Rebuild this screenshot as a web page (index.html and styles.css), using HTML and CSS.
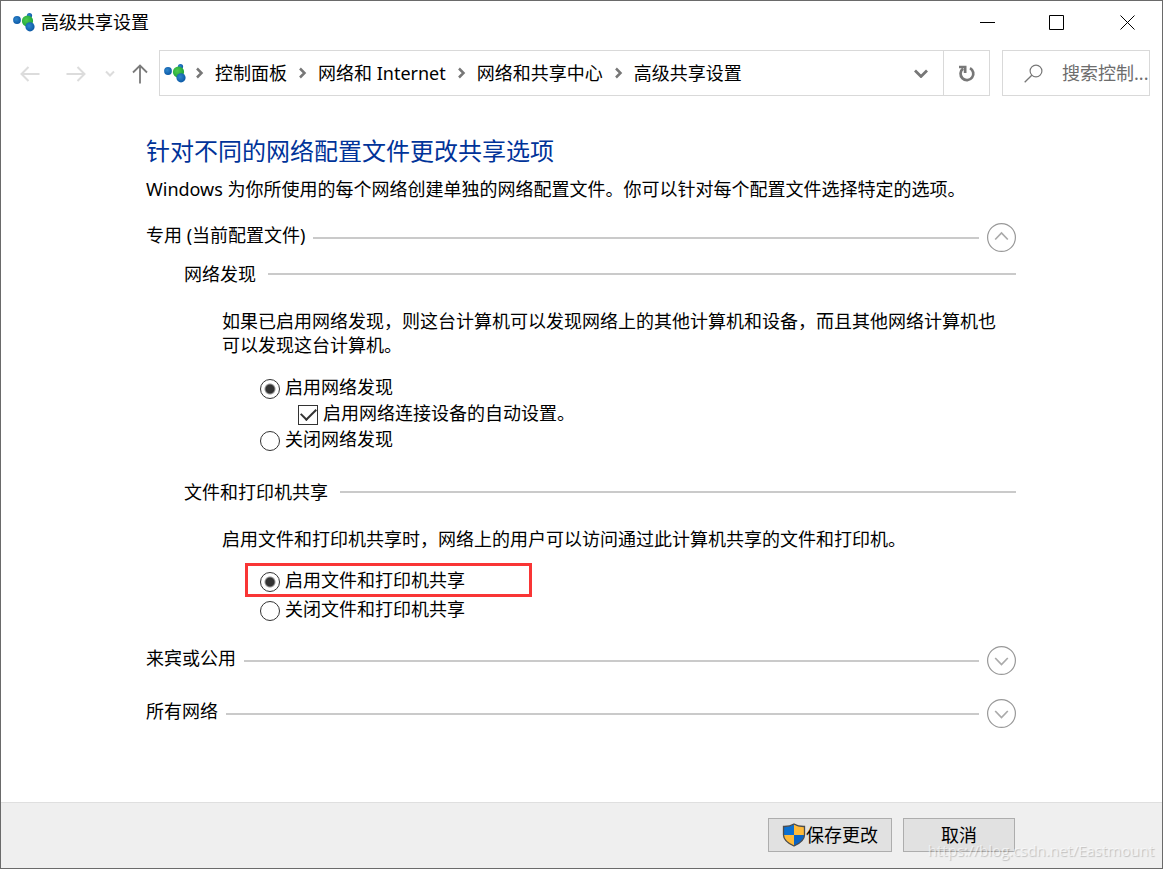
FILE: index.html
```html
<!DOCTYPE html>
<html lang="zh-CN">
<head>
<meta charset="utf-8">
<meta name="viewport" content="width=device-width, initial-scale=1">
<title>高级共享设置</title>
<link rel="stylesheet" href="styles.css">
</head>
<body>
<svg class="defs" width="0" height="0" aria-hidden="true">
  <defs>
    <radialGradient id="blue" cx="40%" cy="40%" r="60%"><stop offset="0" stop-color="#2f86cc"/><stop offset="1" stop-color="#0d5aa7"/></radialGradient>
    <radialGradient id="green" cx="40%" cy="40%" r="60%"><stop offset="0" stop-color="#4fcb4f"/><stop offset="1" stop-color="#1fa53a"/></radialGradient>
    <symbol id="network" viewBox="0 0 22 20">
      <circle cx="4" cy="8" r="3.9" fill="url(#blue)"/>
      <circle cx="16.500" cy="3.600" r="2.600" fill="url(#blue)"/>
      <circle cx="14.500" cy="9" r="5.600" fill="url(#green)"/>
      <circle cx="17" cy="14.800" r="4.600" fill="url(#blue)"/>
    </symbol>
    <symbol id="crumb" viewBox="0 0 10 12"><path d="M2 1.500 6.500 6 2 10.500" fill="none" stroke="#777" stroke-width="2.500"/></symbol>
    <symbol id="up" viewBox="0 0 29 29"><circle cx="14.500" cy="14.500" r="13.900" fill="none" stroke="#999" stroke-width="1.200"/><path d="m8.200 16.500 6.300-6.600 6.300 6.600" fill="none" stroke="#aaa" stroke-width="1.700"/></symbol>
    <symbol id="down" viewBox="0 0 29 29"><circle cx="14.500" cy="14.500" r="13.900" fill="none" stroke="#999" stroke-width="1.200"/><path d="m8.200 12 6.300 6.600 6.300-6.600" fill="none" stroke="#aaa" stroke-width="1.700"/></symbol>
  </defs>
</svg>
<div class="window">
  <header class="titlebar">
    <svg class="net-icon" aria-hidden="true"><use href="#network"/></svg>
    <span class="title">高级共享设置</span>
    <div class="controls">
      <button class="control" type="button" aria-label="最小化"><svg width="15" height="15"><path d="M0 7.500h15" stroke="#000"/></svg></button>
      <button class="control" type="button" aria-label="最大化"><svg width="16" height="15"><path d="M.5.5h14v14H.5z" fill="none" stroke="#000"/></svg></button>
      <button class="control" type="button" aria-label="关闭"><svg width="15" height="15"><path d="m.5.5 14 14m0-14-14 14" stroke="#000"/></svg></button>
    </div>
  </header>

  <nav class="navbar">
    <div class="history">
      <button class="step" type="button" aria-label="后退" disabled><svg width="20" height="16"><path d="M19.500 8H2M8.500 1 1.500 8l7 7" fill="none" stroke="#dcdcdc" stroke-width="2"/></svg></button>
      <button class="step" type="button" aria-label="前进" disabled><svg width="20" height="16"><path d="M.5 8H18M11.500 1l7 7-7 7" fill="none" stroke="#dcdcdc" stroke-width="2"/></svg></button>
      <button class="step recent" type="button" aria-label="最近浏览" disabled><svg width="10" height="8"><path d="m1 1.500 4 4 4-4" fill="none" stroke="#dcdcdc" stroke-width="2"/></svg></button>
      <button class="step parent" type="button" aria-label="向上"><svg width="16" height="20"><path d="M8 19.500V2M1 8.500l7-7 7 7" fill="none" stroke="#7a7a7a" stroke-width="1.800"/></svg></button>
    </div>
    <div class="address">
      <svg class="net-icon" aria-hidden="true"><use href="#network"/></svg>
      <svg class="crumb-arrow first" aria-hidden="true"><use href="#crumb"/></svg>
      <a class="crumb" href="#">控制面板</a>
      <svg class="crumb-arrow" aria-hidden="true"><use href="#crumb"/></svg>
      <a class="crumb" href="#">网络和 Internet</a>
      <svg class="crumb-arrow" aria-hidden="true"><use href="#crumb"/></svg>
      <a class="crumb" href="#">网络和共享中心</a>
      <svg class="crumb-arrow" aria-hidden="true"><use href="#crumb"/></svg>
      <a class="crumb" href="#">高级共享设置</a>
      <button class="open" type="button" aria-label="以前的位置"><svg width="14" height="10"><path d="m1 2.500 6 6 6-6" fill="none" stroke="#777" stroke-width="2.800"/></svg></button>
      <button class="refresh" type="button" aria-label="刷新"><svg width="18" height="18"><path d="M5.100 4.600A6.400 6.400 0 1 0 12 4.100" fill="none" stroke="#777" stroke-width="2.700"/><path d="M1 1.800h7.500V9H5.800V4.300H1z" fill="#777"/></svg></button>
    </div>
    <label class="search">
      <svg width="19" height="19" aria-hidden="true"><circle cx="12" cy="7" r="5.900" fill="none" stroke="#777" stroke-width="1.200"/><path d="M7.800 11.200.7 18.300" stroke="#777" stroke-width="1.300"/></svg>
      <input class="search-input" type="text" placeholder="搜索控制..." aria-label="搜索控制面板">
    </label>
  </nav>

  <main class="content">
    <h1 class="heading">针对不同的网络配置文件更改共享选项</h1>
    <p class="intro">Windows 为你所使用的每个网络创建单独的网络配置文件。你可以针对每个配置文件选择特定的选项。</p>

    <section class="profile">
      <div class="profile-head">
        <h2 class="profile-name">专用 (当前配置文件)</h2>
        <span class="rule"></span>
        <button class="toggle" type="button" aria-label="折叠专用"><svg width="29" height="29"><use href="#up"/></svg></button>
      </div>
      <div class="group">
        <div class="group-head"><h3 class="group-name">网络发现</h3><span class="rule"></span></div>
        <p class="description">如果已启用网络发现，则这台计算机可以发现网络上的其他计算机和设备，而且其他网络计算机也可以发现这台计算机。</p>
        <div class="options discovery">
          <label class="option"><input class="radio" type="radio" name="discovery" checked><span class="caption">启用网络发现</span></label>
          <label class="option nested"><input class="check" type="checkbox" checked><span class="caption">启用网络连接设备的自动设置。</span></label>
          <label class="option"><input class="radio" type="radio" name="discovery"><span class="caption">关闭网络发现</span></label>
        </div>
      </div>
      <div class="group sharing">
        <div class="group-head"><h3 class="group-name">文件和打印机共享</h3><span class="rule"></span></div>
        <p class="description">启用文件和打印机共享时，网络上的用户可以访问通过此计算机共享的文件和打印机。</p>
        <div class="options printers">
          <label class="option marked"><input class="radio" type="radio" name="sharing" checked><span class="caption">启用文件和打印机共享</span></label>
          <label class="option"><input class="radio" type="radio" name="sharing"><span class="caption">关闭文件和打印机共享</span></label>
        </div>
      </div>
    </section>

    <section class="profile">
      <div class="profile-head">
        <h2 class="profile-name">来宾或公用</h2>
        <span class="rule"></span>
        <button class="toggle" type="button" aria-label="展开来宾或公用"><svg width="29" height="29"><use href="#down"/></svg></button>
      </div>
    </section>
    <section class="profile">
      <div class="profile-head">
        <h2 class="profile-name">所有网络</h2>
        <span class="rule"></span>
        <button class="toggle" type="button" aria-label="展开所有网络"><svg width="29" height="29"><use href="#down"/></svg></button>
      </div>
    </section>
  </main>

  <footer class="footer">
    <button class="action save" type="button"><svg width="24" height="24" viewBox="0 0 24 24" aria-hidden="true">
      <path d="M12 1C9 3 5 3.600 1.500 3.500V12c0 5 5 8.500 10.500 11z" fill="#0b6fd0"/>
      <path d="M12 1c3 2 7 2.600 10.500 2.500V12c0 5-5 8.500-10.500 11z" fill="#0a63c4"/>
      <path d="M12 1c3 2 7 2.600 10.500 2.500V12H12zM1.500 12H12v11C6.500 20.500 1.500 17 1.500 12z" fill="#ffba38"/>
      <path d="M12 1C9 3 5 3.600 1.500 3.500V12c0 5 5 8.500 10.500 11 5.500-2.500 10.500-6 10.500-11V3.500C19 3.600 15 3 12 1z" fill="none" stroke="#4d4d4d" stroke-width="1.300"/>
    </svg>保存更改</button>
    <button class="action cancel" type="button">取消</button>
    <span class="watermark">https://blog.csdn.net/Eastmount</span>
  </footer>
</div>
</body>
</html>
```

FILE: styles.css
```css
* { box-sizing: border-box; }

body {
  margin: 0;
  background: #fff;
  color: #000;
  font: 18px/24px "Noto Sans", "Noto Sans CJK SC", sans-serif;
}

button, input { font: inherit; color: inherit; }

button {
  display: flex;
  align-items: center;
  justify-content: center;
  padding: 0;
  border: 0;
  background: none;
}

svg { display: block; flex: none; }
.defs { position: absolute; }

h1, h2, h3, p { margin: 0; font-weight: inherit; }
h2, h3 { font-size: inherit; }

.window {
  display: flex;
  flex-direction: column;
  min-height: 100vh;
  border: 1px solid #6a6a6a;
}

/* Title bar */
.titlebar {
  display: flex;
  align-items: center;
  height: 42px;
  padding-left: 12px;
}
.net-icon { width: 22px; height: 20px; }
.title { margin-left: 6px; }
.controls { display: flex; align-self: stretch; margin-left: auto; }
.control { width: 70px; }

/* Navigation bar */
.navbar {
  display: flex;
  height: 46px;
  margin: 7px 12px 0 5px;
}
.history { display: flex; }
.step { width: 46px; padding: 1px 0 0 1px; }
.recent { width: 22px; }
.parent { width: 39px; }
.address {
  display: flex;
  flex: 1;
  align-items: center;
  min-width: 0;
  padding-left: 4px;
  border: 1px solid #d9d9d9;
  white-space: nowrap;
}
.crumb { padding-bottom: 1px; color: inherit; text-decoration: none; }
.crumb-arrow { width: 10px; height: 12px; margin: 0 10px 0 11px; }
.first { margin-left: 9px; }
.open { width: 44px; height: 44px; margin-left: auto; }
.refresh { width: 46px; height: 44px; border-left: 1px solid #d9d9d9; }
.search {
  display: flex;
  align-items: center;
  gap: 19px;
  width: 148px;
  margin-left: 12px;
  padding-left: 21px;
  border: 1px solid #d9d9d9;
}
.search-input {
  flex: 1;
  min-width: 0;
  padding: 0;
  border: 0;
  outline: 0;
  background: none;
}
.search-input::placeholder { color: #6d6d6d; opacity: 1; }

/* Settings */
.content { flex: 1; padding: 39px 146px 32px 145px; }
.heading { color: #003399; font-size: 24px; line-height: 32px; }
.intro { margin-top: 10px; }
.profile { margin-top: 24px; }
.intro + .profile, .profile:nth-of-type(2) { margin-top: 22px; }
.profile-head { display: flex; align-items: center; gap: 8px; height: 29px; }
.profile-name { padding-bottom: 6px; }
.rule { flex: 1; height: 2px; background: #cacaca; }
.group { margin: 10px 0 0 38px; }
.sharing { margin-top: 26px; }
.group-head { display: flex; align-items: center; gap: 12px; }
.description { margin: 23px 16px 0 38px; }
.options { display: flex; flex-direction: column; align-items: flex-start; margin-left: 76px; }
.discovery { margin-top: 19px; }
.option { display: flex; align-items: center; gap: 5px; height: 26px; }
.caption { padding-bottom: 5px; }
.nested { margin-left: 38px; }
.printers { gap: 1px; margin-top: 12px; }
.marked {
  width: 287px;
  height: 34px;
  margin-left: -15px;
  padding: 4px 0 0 12px;
  border: 3px solid #f93535;
}

.radio, .check {
  flex: none;
  width: 20px;
  height: 20px;
  margin: 0;
  border: 1px solid #333;
  background: #fff;
  appearance: none;
}
.radio { border-radius: 50%; }
.radio:checked { background: radial-gradient(circle, #333 0 4px, #fff 6px); }
.check { display: grid; place-items: center; }
.check:checked::before {
  content: "";
  width: 13px;
  height: 7px;
  margin-bottom: 5px;
  border: solid #333;
  border-width: 0 0 2px 2px;
  transform: rotate(-45deg);
}

/* Footer */
.footer {
  position: relative;
  display: flex;
  justify-content: flex-end;
  gap: 11px;
  padding: 15px 147px 16px;
  border-top: 1px solid #dfdfdf;
  background: #efefef;
}
.action {
  height: 34px;
  border: 1px solid #adadad;
  background: #e1e1e1;
}
.save { width: 124px; }
.cancel { width: 112px; }
.watermark {
  position: absolute;
  right: 8px;
  bottom: 6px;
  color: rgba(255, 255, 255, .6);
  font-family: "Open Sans", sans-serif;
  font-size: 15px;
  text-shadow: 1px 1px 1px rgba(0, 0, 0, .2);
}
```
